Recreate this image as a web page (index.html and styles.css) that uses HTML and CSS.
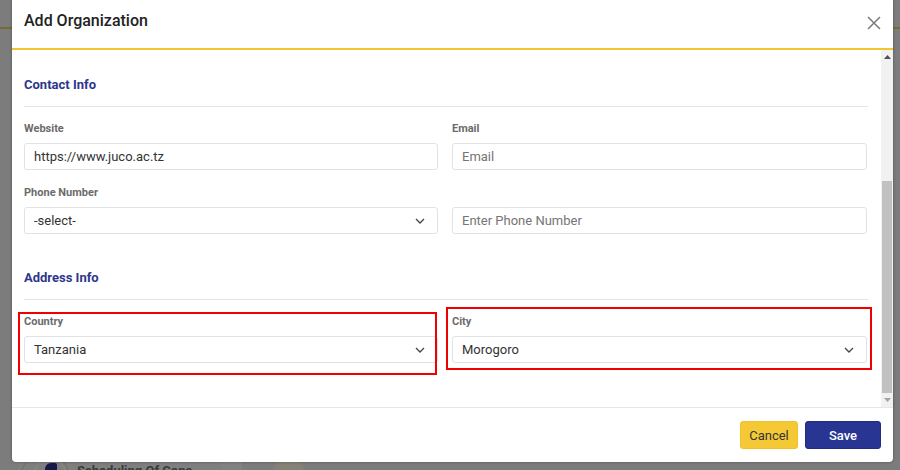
FILE: index.html
```html
<!DOCTYPE html>
<html lang="en">
<head>
<meta charset="utf-8">
<title>Add Organization</title>
<link rel="stylesheet" href="styles.css">
</head>
<body>
<div class="app">
  <div class="app-top"></div>
  <div class="app-line"></div>
  <div class="app-spacer"></div>
  <div class="app-cards">
    <div class="app-card">
      <span class="ring-outer"></span>
      <span class="ring"><span class="ring-dot"></span></span>
      <span class="card-text">Scheduling Of Cons</span>
    </div>
    <div class="app-col"></div>
    <div class="app-card2"><span class="ring2"></span></div>
  </div>
</div>

<div class="modal">
  <div class="modal-header">
    <h1 class="modal-title">Add Organization</h1>
    <svg class="close" width="14" height="14" viewBox="0 0 14 14"><path d="M1 1L13 13M13 1L1 13" stroke="#7a7a7a" stroke-width="1.5" fill="none"/></svg>
  </div>
  <div class="modal-body">
    <div class="content">
      <div class="section-title">Contact Info</div>
      <div class="grid">
        <div class="field">
          <label class="label">Website</label>
          <div class="input"><span class="value">https://www.juco.ac.tz</span></div>
        </div>
        <div class="field">
          <label class="label">Email</label>
          <div class="input"><span class="placeholder">Email</span></div>
        </div>
        <div class="field">
          <label class="label">Phone Number</label>
          <div class="input select"><span class="value">-select-</span>
            <svg class="chev" width="10" height="6" viewBox="0 0 10 6"><polyline points="1,1 5,5 9,1" fill="none" stroke="#444" stroke-width="1.3"/></svg>
          </div>
        </div>
        <div class="field">
          <label class="label">&nbsp;</label>
          <div class="input"><span class="placeholder">Enter Phone Number</span></div>
        </div>
      </div>
      <div class="section-title section-2">Address Info</div>
      <div class="grid">
        <div class="field">
          <label class="label">Country</label>
          <div class="input select"><span class="value">Tanzania</span>
            <svg class="chev" width="10" height="6" viewBox="0 0 10 6"><polyline points="1,1 5,5 9,1" fill="none" stroke="#444" stroke-width="1.3"/></svg>
          </div>
        </div>
        <div class="field">
          <label class="label">City</label>
          <div class="input select"><span class="value">Morogoro</span>
            <svg class="chev" width="10" height="6" viewBox="0 0 10 6"><polyline points="1,1 5,5 9,1" fill="none" stroke="#444" stroke-width="1.3"/></svg>
          </div>
        </div>
      </div>
    </div>
    <div class="scrollbar">
      <div class="sb-arrow"><svg width="7" height="4" viewBox="0 0 7 4"><polygon points="0,4 3.5,0 7,4" fill="#505050"/></svg></div>
      <div class="sb-track"><div class="sb-thumb"></div></div>
      <div class="sb-arrow"><svg width="7" height="4" viewBox="0 0 7 4"><polygon points="0,0 3.5,4 7,0" fill="#a3a3a3"/></svg></div>
    </div>
  </div>
  <div class="modal-footer">
    <button class="btn btn-cancel">Cancel</button>
    <button class="btn btn-save">Save</button>
  </div>
</div>

<div class="mark mark-country"></div>
<div class="mark mark-city"></div>
</body>
</html>
```

FILE: styles.css
```css
* { box-sizing: border-box; }
html, body {
  margin: 0;
  padding: 0;
  width: 900px;
  height: 470px;
  overflow: hidden;
  background: #7c7c7c;
  font-family: Roboto, "Liberation Sans", Arial, sans-serif;
}
.app {
  height: 470px;
  display: flex;
  flex-direction: column;
  overflow: hidden;
}
.app-top { height: 27px; background: #7c7c7c; }
.app-line { height: 2px; background: #7a6a2e; }
.app-spacer { flex: 1; }
.app-cards {
  height: 18px;
  display: flex;
  padding-left: 18px;
  overflow: hidden;
}
.app-card {
  width: 204px;
  position: relative;
  display: flex;
  align-items: flex-start;
  background: #7f7f7f;
}
.ring-outer {
  position: absolute;
  left: 2px;
  top: 1px;
  width: 50px;
  height: 50px;
  border: 1px solid #7c7047;
  border-radius: 50%;
}
.ring {
  position: absolute;
  left: 16px;
  top: 6px;
  width: 32px;
  height: 32px;
  border: 1px solid #8a8a8a;
  border-radius: 50%;
}
.ring-dot {
  position: absolute;
  left: 10px;
  top: 4px;
  width: 12px;
  height: 14px;
  background: #15194a;
  border-radius: 6px 2px 2px 2px;
}
.card-text {
  margin-left: 59px;
  margin-top: 11px;
  font-size: 13px;
  line-height: 16px;
  font-weight: 700;
  color: #3a3a3a;
}
.app-col { width: 20px; background: #828282; }
.app-card2 { flex: 1; position: relative; }
.ring2 {
  position: absolute;
  left: 32px;
  top: 4px;
  width: 30px;
  height: 30px;
  border-radius: 50%;
  background: #858176;
}

.modal {
  position: absolute;
  left: 12px;
  top: 0;
  width: 881px;
  height: 462px;
  background: #fff;
  border-radius: 0 0 4px 4px;
  box-shadow: 0 0 3px rgba(0,0,0,0.35);
  display: flex;
  flex-direction: column;
}
.modal-header {
  height: 50px;
  border-bottom: 2px solid #f4c52f;
  display: flex;
  align-items: flex-start;
  justify-content: space-between;
  padding: 11px 12px 0 12px;
}
.modal-title {
  margin: 0;
  font-size: 16px;
  line-height: 20px;
  font-weight: 500;
  color: #222;
}
.close { margin-top: 5px; }

.modal-body {
  flex: 1;
  display: flex;
  min-height: 0;
}
.content {
  flex: 1;
  padding: 27px 13px 0 12px;
  overflow: hidden;
}
.section-title {
  font-size: 13px;
  line-height: 16px;
  font-weight: 700;
  color: #2e368c;
  padding-bottom: 13px;
  border-bottom: 1px solid #e2e4e8;
  margin-bottom: 15px;
}
.section-2 { margin-top: 36px; }
.grid {
  display: grid;
  grid-template-columns: 414px 415px;
  column-gap: 14px;
  row-gap: 16px;
}
.field { display: flex; flex-direction: column; }
.label {
  font-size: 11px;
  line-height: 14px;
  font-weight: 700;
  color: #6b6b6b;
  margin-bottom: 7px;
}
.input {
  height: 27px;
  border: 1px solid #dfe2e7;
  border-radius: 3px;
  display: flex;
  align-items: center;
  justify-content: space-between;
  padding: 0 11px 0 9px;
  font-size: 13px;
}
.value { color: #333; }
.placeholder { color: #757575; }
.chev { margin-right: 1px; }

.scrollbar {
  width: 12px;
  background: #f1f1f1;
  display: flex;
  flex-direction: column;
}
.sb-arrow {
  height: 14px;
  display: flex;
  align-items: center;
  justify-content: center;
}
.sb-track {
  flex: 1;
  padding-top: 117px;
  display: flex;
  flex-direction: column;
}
.sb-thumb {
  height: 212px;
  margin: 0 1px;
  background: #c1c1c1;
}

.modal-footer {
  height: 55px;
  border-top: 1px solid #e6e6e6;
  display: flex;
  justify-content: flex-end;
  align-items: flex-start;
  gap: 7px;
  padding: 13px 12px 0 12px;
}
.btn {
  height: 28px;
  border-radius: 3px;
  font-family: Roboto, "Liberation Sans", Arial, sans-serif;
  font-size: 13px;
  cursor: pointer;
}
.btn-cancel {
  width: 58px;
  background: #f4c935;
  border: 1px solid #efc22a;
  color: #333;
}
.btn-save {
  width: 76px;
  background: #283593;
  border: 1px solid #222c80;
  color: #fff;
  font-weight: 500;
}

.mark {
  position: absolute;
  border: 2px solid #f00000;
}
.mark-country { left: 18px; top: 312px; width: 419px; height: 63px; }
.mark-city { left: 446px; top: 307px; width: 426px; height: 63px; }
```
